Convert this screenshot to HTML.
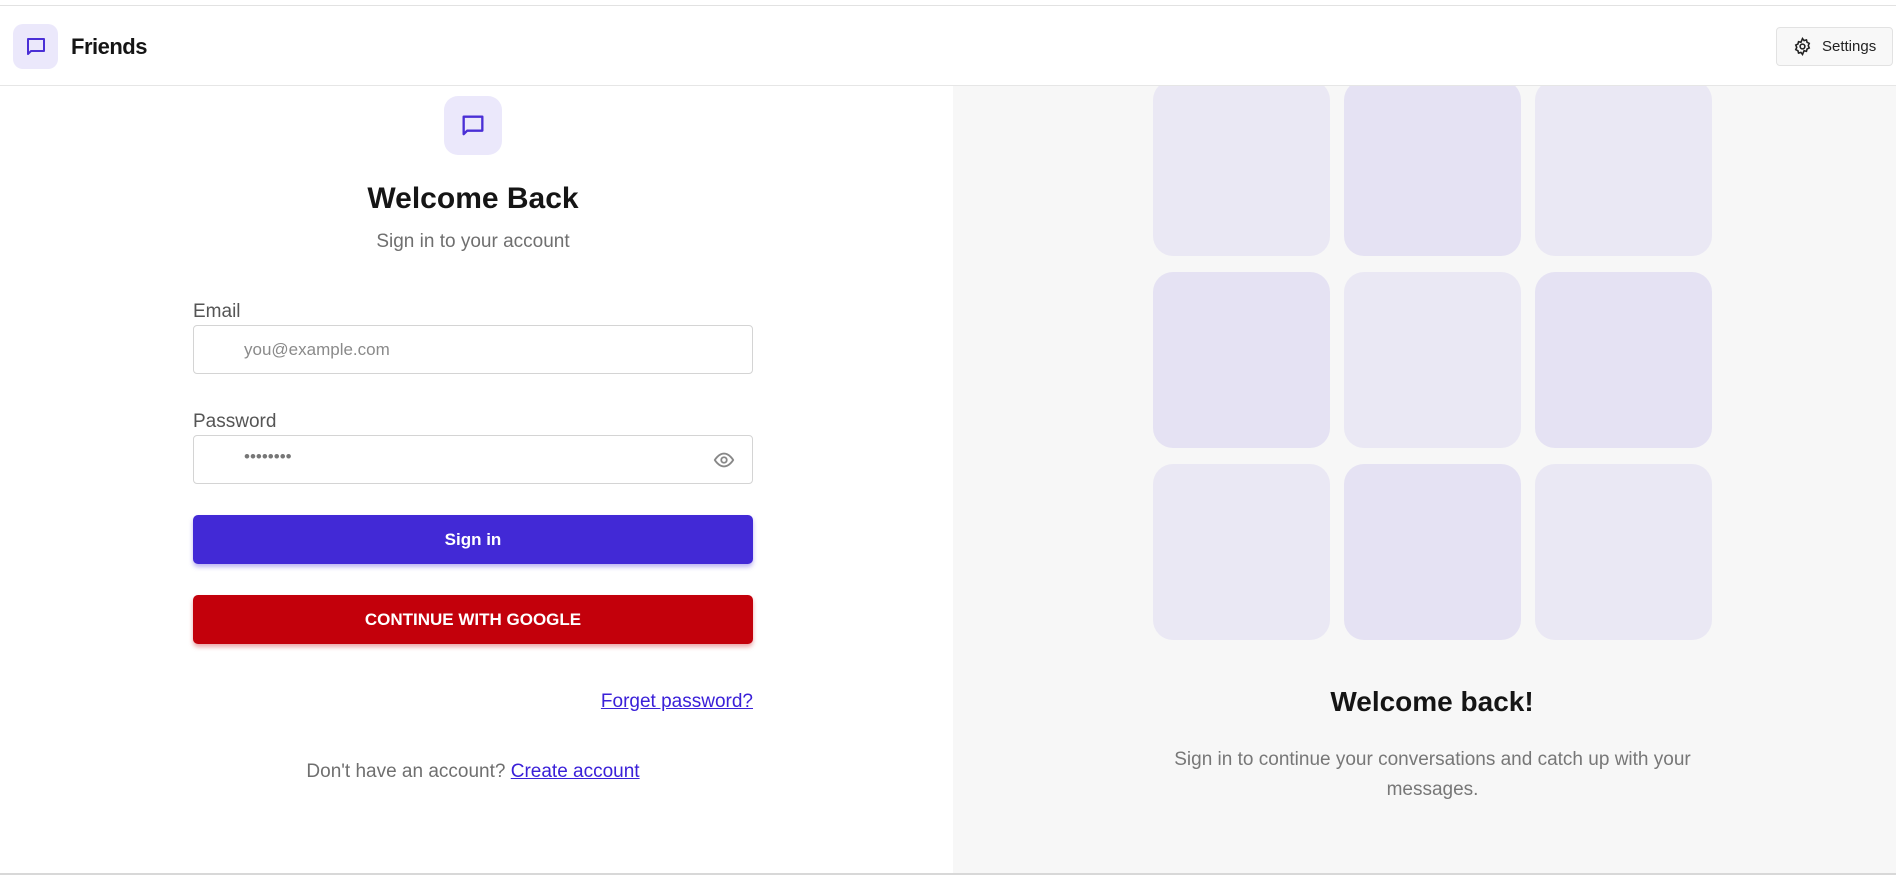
<!DOCTYPE html>
<html><head><meta charset="utf-8"><style>
*{box-sizing:border-box;margin:0;padding:0}
body{width:1896px;height:877px;overflow:hidden;background:#fff;font-family:"Liberation Sans",sans-serif;position:relative;color:#151515}
.abs{position:absolute}
.topline{left:0;top:5px;width:1896px;height:1px;background:#e2e2e2}
.header{left:0;top:6px;width:1896px;height:80px;border-bottom:1px solid #e6e6e6;background:#fff;z-index:2}
.logo{left:13px;top:24px;width:45px;height:45px;background:#ebe8fb;border-radius:10px;display:flex;align-items:center;justify-content:center}
.right{left:953px;top:86px;width:943px;height:787px;background:#f7f7f7}
.bottomline{left:0;top:873px;width:1896px;height:2px;background:#d8d8d8}
.tile{width:177px;height:176px;border-radius:20px}
.a{background:#eae8f4}.b{background:#e5e2f3}
.input{left:193px;width:560px;height:49px;border:1px solid #d4d4d4;border-radius:4px}
.label{left:193px;font-size:19px;color:#555}
.btn{left:193px;width:560px;height:49px;border-radius:5px;color:#fff;font-weight:bold;font-size:17px;display:flex;align-items:center;justify-content:center}
a{color:#3a20d8;text-decoration:underline}
</style></head><body>
<div class="abs topline"></div>
<div class="abs right"></div>
<div class="abs tile a" style="left:1153px;top:80px"></div>
<div class="abs tile b" style="left:1344px;top:80px"></div>
<div class="abs tile a" style="left:1535px;top:80px"></div>
<div class="abs tile b" style="left:1153px;top:272px"></div>
<div class="abs tile a" style="left:1344px;top:272px"></div>
<div class="abs tile b" style="left:1535px;top:272px"></div>
<div class="abs tile a" style="left:1153px;top:464px"></div>
<div class="abs tile b" style="left:1344px;top:464px"></div>
<div class="abs tile a" style="left:1535px;top:464px"></div>
<div class="abs header"></div>
<div class="abs logo" style="z-index:3"><svg width="24" height="24" viewBox="0 0 24 24" fill="none" stroke="#4a2fd6" stroke-width="2" stroke-linejoin="round"><path d="M4 4h16v12H7l-3 3z"/></svg></div>
<div class="abs" style="left:71px;top:34px;font-size:22px;font-weight:bold;z-index:3;letter-spacing:-0.5px">Friends</div>
<div class="abs" style="left:1776px;top:27px;width:117px;height:39px;border:1px solid #e2e2e2;border-radius:4px;background:#f8f8f8;z-index:3;display:flex;align-items:center;padding-left:16px;font-size:15px;color:#222">
<svg width="19" height="19" viewBox="0 0 24 24" fill="none" stroke="#222" stroke-width="2"><circle cx="12" cy="12" r="3"/><path d="M12 2l2 2.5 3-.8.8 3 2.7 1.3-1.2 2.9 1.2 2.9-2.7 1.3-.8 3-3-.8L12 22l-2-2.5-3 .8-.8-3-2.7-1.3 1.2-2.9-1.2-2.9 2.7-1.3.8-3 3 .8z"/></svg>
<span style="margin-left:10px">Settings</span></div>

<div class="abs" style="left:444px;top:96px;width:58px;height:59px;background:#ebe8fb;border-radius:14px;display:flex;align-items:center;justify-content:center"><svg width="28" height="28" viewBox="0 0 24 24" fill="none" stroke="#4a2fd6" stroke-width="2" stroke-linejoin="round"><path d="M4 4h16v12H7l-3 3z"/></svg></div>
<div class="abs" style="left:0;width:946px;top:182px;text-align:center;font-size:30px;font-weight:bold">Welcome Back</div>
<div class="abs" style="left:0;width:946px;top:231px;text-align:center;font-size:19px;color:#6f6f6f">Sign in to your account</div>
<div class="abs label" style="top:301px">Email</div>
<div class="abs input" style="top:325px"><span style="position:absolute;left:50px;top:14px;font-size:17px;color:#8a8a8a">you@example.com</span></div>
<div class="abs label" style="top:411px">Password</div>
<div class="abs input" style="top:435px"><span style="position:absolute;left:50px;top:11px;font-size:17px;color:#777;letter-spacing:0px">••••••••</span>
<svg style="position:absolute;right:16px;top:13px" width="24" height="22" viewBox="0 0 24 24" fill="none" stroke="#888" stroke-width="2"><path d="M2 12s4-7 10-7 10 7 10 7-4 7-10 7S2 12 2 12z"/><circle cx="12" cy="12" r="3"/></svg></div>
<div class="abs btn" style="top:515px;background:#4229d6;box-shadow:0 3px 5px rgba(66,41,214,.35)">Sign in</div>
<div class="abs btn" style="top:595px;background:#c3000b;box-shadow:0 3px 5px rgba(195,0,11,.35)">CONTINUE WITH GOOGLE</div>
<div class="abs" style="left:193px;width:560px;top:691px;text-align:right;font-size:19px"><a>Forget password?</a></div>
<div class="abs" style="left:0;width:946px;top:761px;text-align:center;font-size:19px;color:#6f6f6f">Don't have an account? <a>Create account</a></div>

<div class="abs" style="left:953px;width:958px;top:686px;text-align:center;font-size:28px;font-weight:bold">Welcome back!</div>
<div class="abs" style="left:1150px;width:565px;top:745px;text-align:center;font-size:19px;line-height:30px;color:#777">Sign in to continue your conversations and catch up with your messages.</div>
<div class="abs bottomline"></div>
</body></html>
